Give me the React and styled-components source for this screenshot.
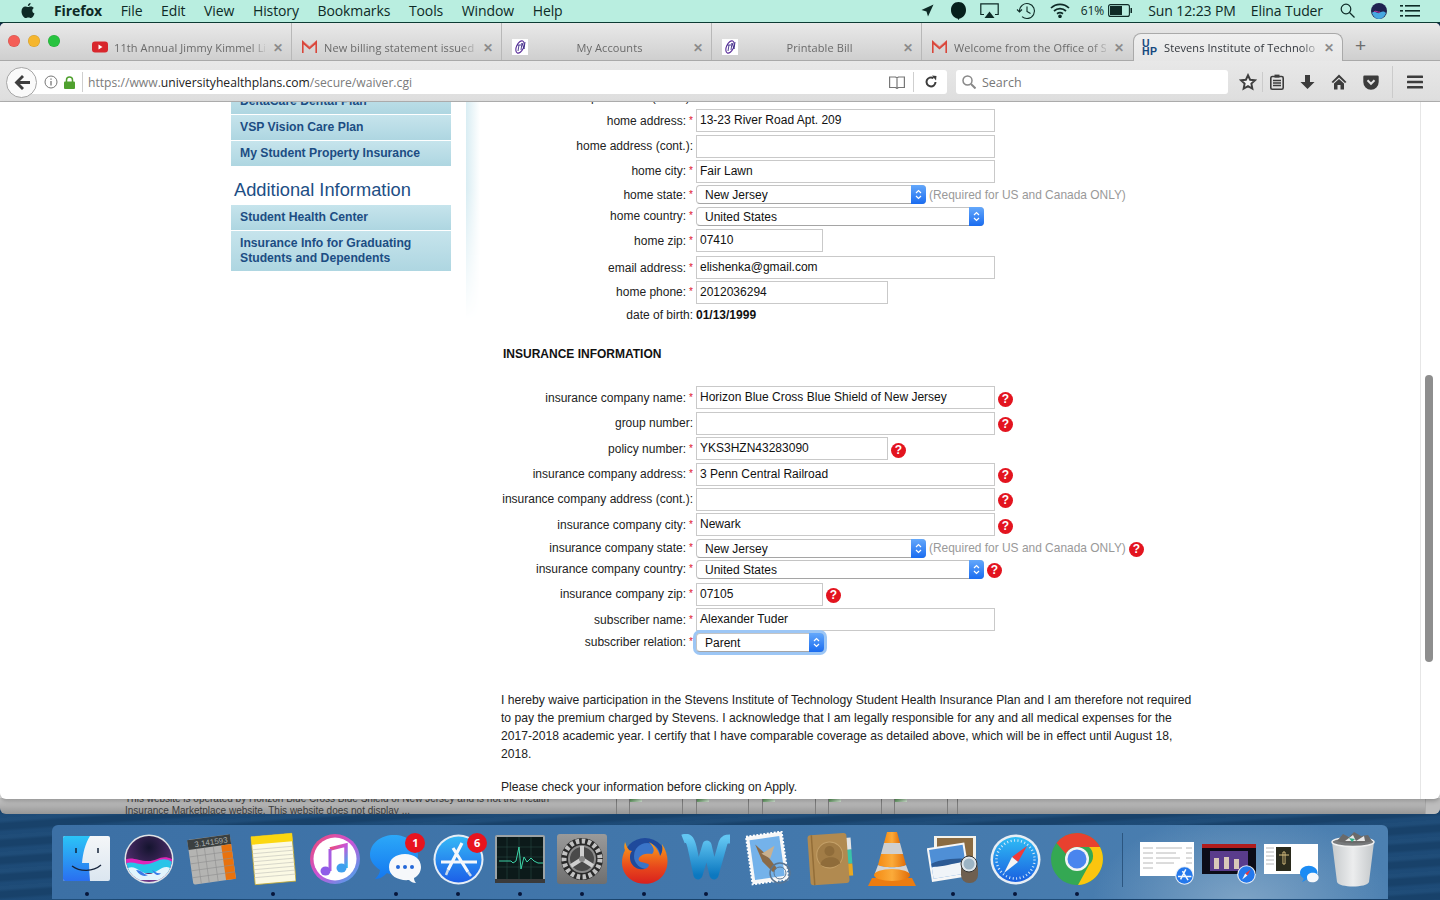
import React from "react";
import styled, { createGlobalStyle } from "styled-components";

const Global = createGlobalStyle`
  html, body { margin: 0; padding: 0; background: #10263f; overflow: hidden; }
  * { box-sizing: border-box; }
`;

const Screen = styled.div`
  width: 1440px; height: 900px; display: flex; flex-direction: column; overflow: hidden;
  font-family: "Liberation Sans", Arial, sans-serif; position: relative;
  background:
    repeating-linear-gradient(176deg, rgba(120,170,210,.06) 0 3px, rgba(0,0,0,.08) 6px 11px, rgba(110,160,210,.04) 14px 17px),
    linear-gradient(180deg, #0a1a2e 0, #0f2a49 18px, #1a4773 70px);
`;

/* ---------- menu bar ---------- */
const MenuBar = styled.div`
  height: 23px; flex: none; background: #b9eee0; border-bottom: 1px solid #0d3b34;
  display: flex; align-items: center; padding: 0 0 1px 21px;
  font-family: "Open Sans", sans-serif; font-size: 14px; color: #0e2a26;
`;
const AppleSlot = styled.span` width: 33px; display: flex; `;
const MenuItem = styled.span`
  margin-right: 18.6px; font-weight: ${p => (p.$bold ? 700 : 400)}; white-space: nowrap; letter-spacing: -.1px;
`;
const MenuRight = styled.div` margin-left: auto; display: flex; align-items: center; height: 22px; `;
const StatusIcon = styled.span` display: flex; margin-right: ${p => p.$mr ?? 14}px; `;
const StatusText = styled.span`
  font-size: ${p => p.$s ?? 14}px; margin-right: ${p => p.$mr ?? 13}px; white-space: nowrap; letter-spacing: -.1px;
`;

/* ---------- browser window ---------- */
const Window = styled.div`
  flex: none; height: 776px; display: flex; flex-direction: column;
  background: #e6e6e6; border-radius: 5px 5px 0 0;
`;
const TabStrip = styled.div`
  height: 38px; flex: none; display: flex; align-items: stretch; position: relative;
  background: linear-gradient(#e9e9e9, #cfcfcf); border-bottom: 1px solid #a9a9a9;
  border-radius: 5px 5px 0 0;
`;
const Lights = styled.div` width: 82px; flex: none; display: flex; gap: 8px; padding: 12px 0 0 8px; `;
const Light = styled.span`
  width: 12px; height: 12px; border-radius: 50%; background: ${p => p.$c}; box-shadow: inset 0 0 0 .5px rgba(0,0,0,.15);
`;
const Tab = styled.div`
  width: 210px; flex: none; display: flex; align-items: center; padding: 11px 0 0 10px; height: 37px;
  font-family: "Open Sans", sans-serif; font-size: 11px; color: #6a6a6a; position: relative;
  border-right: ${p => (p.$noline ? "none" : "1px solid #b8b8b8")};
`;
const ActiveTab = styled(Tab)`
  background: linear-gradient(#efefef, #e6e6e6); border: 1px solid #a9a9a9; border-bottom: none;
  border-radius: 8px 8px 0 0; margin: 10px 0 -1px 1px; height: 28px; padding: 0 0 1px 8px; color: #30343a;
`;
const TabIconBox = styled.span` width: 16px; height: 16px; flex: none; display: flex; margin-right: 6px; `;
const TabTitle = styled.span`
  flex: 1; white-space: nowrap; overflow: hidden; min-width: 0; text-align: ${p => (p.$center ? "center" : "left")};
  -webkit-mask-image: linear-gradient(90deg, #000 90%, rgba(0,0,0,.25));
  letter-spacing: .1px;
`;
const TabClose = styled.span`
  width: 26px; flex: none; padding-right: 1px; text-align: center; font-size: 12px; color: #8b8b8b; font-weight: 700;
`;
const UhpLogo = styled.span`
  width: 16px; flex: none; margin-right: 6px; display: flex; flex-direction: column; align-items: flex-start;
  font: 700 10.5px/8.500px "Liberation Sans", sans-serif; color: #17497f; letter-spacing: .3px;
`;
const NewTab = styled.span` margin: 11px 0 0 12px; font: 400 19px/24px "Liberation Sans", sans-serif; color: #6c6c6c; `;

const Toolbar = styled.div`
  height: 41px; flex: none; display: flex; align-items: center; padding: 2px 0 0 6px; position: relative;
  background: linear-gradient(#e8e8e8, #dedede); border-bottom: 1px solid #b1b1b1;
`;
const BackBtn = styled.span`
  width: 31px; height: 31px; border-radius: 50%; background: #fafafa; border: 1px solid #a6a6a6; flex: none;
  display: flex; align-items: center; justify-content: center; z-index: 1;
`;
const UrlBar = styled.div`
  width: 926px; height: 24px; margin-left: -16px; padding-left: 23px; flex: none; background: #fff; border-radius: 0 3px 3px 0;
  display: flex; align-items: center; font-family: "Open Sans", sans-serif; font-size: 12.15px; color: #7b7b7b;
`;
const UrlIcon = styled.span` display: flex; margin-right: ${p => p.$mr ?? 5}px; `;
const UrlDivider = styled.span` width: 1px; height: 20px; background: #cfcfcf; margin: 0 ${p => p.$r ?? 5}px 0 0; `;
const Host = styled.span` color: #222; `;
const UrlSpacer = styled.span` flex: 1; `;
const SearchBox = styled.div`
  width: 272px; height: 24px; margin-left: 9px; flex: none; background: #fff; border-radius: 3px; display: flex; align-items: center;
  padding-left: 6px; gap: 6px; font-family: "Open Sans", sans-serif; font-size: 12.5px; color: #777;
`;
const ToolIcons = styled.div` display: flex; align-items: center; margin-left: 11px; `;
const ToolIcon = styled.span` width: ${p => p.$w ?? 32}px; margin-left: ${p => p.$ml ?? 0}px; display: flex; justify-content: center; `;
const ToolDivider = styled.span`
  width: 1px; height: ${p => p.$h ?? 32}px; background: #cbcbcb; margin: 0 ${p => p.$mr ?? 0}px 0 ${p => p.$ml ?? 0}px;
`;

/* ---------- page ---------- */
const Viewport = styled.div`
  flex: none; height: 697px; background: #fff; display: flex; overflow: hidden; border-radius: 0 0 6px 6px;
  box-shadow: 0 2px 4px rgba(0,0,0,.25); position: relative; z-index: 1;
`;
const PageArea = styled.div` width: 1421px; flex: none; overflow: hidden; display: flex; border-right: 1px solid #e6e6e6; `;
const Rail = styled.div` flex: 1; padding: 273px 0 0 4px; `;
const Thumb = styled.div` width: 8px; height: 287px; border-radius: 4px; background: #8e8e8e; `;

const Sidebar = styled.aside`
  width: 220px; margin-left: 231px; flex: none; display: flex; flex-direction: column; gap: 1px; margin-top: -13px;
`;
const SideLink = styled.div`
  padding: 5px 9px; font-size: 12.2px; line-height: 15px; font-weight: 700; color: #1c4d83;
  background: linear-gradient(#c6e4ec, #aed6e1); min-height: 25px;
`;
const SideHeading = styled.h3`
  margin: 11px 0 2px 3px; font-size: 18.3px; line-height: 24px; font-weight: 400; color: #1d4e85;
`;
const Fade = styled.div`
  width: 14px; height: 218px; margin-left: 15px; flex: none;
  background: linear-gradient(90deg, #d9edf3, #fff);
  -webkit-mask-image: linear-gradient(#000 40%, transparent);
`;
const Main = styled.main`
  flex: none; width: 710px; margin: -16px 0 0 18px; font-size: 12px; color: #222;
`;
const Row = styled.div`
  display: flex; align-items: center; height: ${p => p.$h ?? (p.$select ? 21.8 : 25.4)}px;
`;
const Label = styled.label` width: 195px; flex: none; text-align: right; white-space: nowrap; `;
const Star = styled.span` color: #e0142c; margin-left: 3px; font-size: 10px; vertical-align: 1px; `;
const Field = styled.div`
  width: ${p => p.$w}px; height: 23px; margin-left: 3px; flex: none; border: 1px solid #c9c9c9; background: #fff;
  padding: 0 3px; line-height: 21px; color: #111; white-space: nowrap;
`;
const Select = styled.div`
  width: ${p => p.$w}px; height: 19px; margin-left: 3px; flex: none; display: flex; border-radius: 4px; background: #fff;
  border: 1px solid #c4c4c4; border-bottom-color: #a5a5a5; color: #111; line-height: 18px; padding-left: 8px; position: relative; overflow: visible;
  box-shadow: ${p => (p.$focus ? "0 0 0 3px #9cc6f5" : "none")};
`;
const SelectText = styled.span` flex: 1; `;
const Stepper = styled.span`
  width: 15px; margin: -1px -1px -1px 0; flex: none; border-radius: 0 4px 4px 0; background: linear-gradient(#64a8fb, #1a6cf0);
  display: flex; align-items: center; justify-content: center;
`;
const Hint = styled.span` color: #999; margin-left: 3px; white-space: nowrap; font-size: 11.95px; `;
const Help = styled.span`
  width: 15px; height: 15px; border-radius: 50%; background: #e3141f; color: #fff; flex: none;
  margin: 3px 0 0 3px; font: 700 12px/15px "Liberation Sans", sans-serif; text-align: center;
`;
const Bold = styled.b` margin-left: 3px; color: #111; `;
const SectionTitle = styled.h4`
  margin: 20px 0 23px 5px; font-size: 12px; line-height: 16px; font-weight: 700; color: #111;
`;
const Legal = styled.p`
  margin: ${p => p.$mt}px 0 0 3px; max-width: 695px; line-height: 18px; font-size: 12.15px; color: #222;
`;

/* ---------- window behind ---------- */
const BehindStrip = styled.div`
  height: 16px; flex: none; margin-top: -1px; display: flex; overflow: hidden; position: relative;
  background: linear-gradient(#c8c8c8, #979797); border-radius: 0 0 6px 6px; font-size: 10px; color: #3a3a3a;
`;
const BehindText = styled.div`
  width: 491px; margin-left: 125px; flex: none; line-height: 12px; margin-top: -5px; white-space: nowrap;
`;
const Cell = styled.div`
  width: ${p => p.$w ?? 66.2}px; flex: none; height: 16px; border-left: 1px solid #7d7d7d; padding-left: ${p => p.$in ?? 12.4}px; display: flex;
`;
const CellInner = styled.div` flex: 1; border-left: 1px solid #7d7d7d; `;
const Broken = styled.span`
  display: block; width: 12px; height: 4px; background: linear-gradient(135deg, #4f8f4f, #d8e8d8);
`;
const BehindRail = styled.div` margin-left: auto; width: 15px; border-left: 1px solid #aaa; background: #bdbdbd; `;

/* ---------- dock ---------- */
const Desktop = styled.div` flex: 1; padding: 11px 52px 0; display: flex; `;
const Dock = styled.div`
  width: 1336px; height: 74px; border-radius: 6px 6px 0 0; padding: 3px 0 0 4px; display: flex;
  background:
    radial-gradient(150px 90px at 1190px 105%, rgba(190,210,225,.45), transparent),
    linear-gradient(90deg, #3c70a5, #4378ac 55%, #4c80b1);
`;
const Slot = styled.div`
  width: ${p => p.$w ?? 61.9}px; flex: none; display: flex; flex-direction: column; align-items: center; position: relative;
`;
const IconBox = styled.div` height: 62px; display: flex; align-items: center; justify-content: center; `;
const Dot = styled.span`
  width: 4px; height: 4px; border-radius: 50%; background: #06163a; margin-top: 2px; visibility: ${p => (p.$on ? "visible" : "hidden")};
`;
const Badge = styled.span`
  position: absolute; top: 5px; right: 2px; width: 20px; height: 20px; border-radius: 50%; background: #e8141e; color: #fff;
  font: 700 11px/20px "Open Sans", sans-serif; text-align: center;
`;
const DockDivider = styled.span` width: 1px; height: 54px; margin: 5px 13px 0 14px; background: #2c5680; flex: none; `;

/* ---------- drawings ---------- */
const Apple = () => (
  <svg width="14" height="16" viewBox="0 0 14 16" fill="#0e2a26">
    <path d="M9.600 0c.1 1.200-.9 2.900-2.700 3 -.2-1.300 1-2.800 2.700-3zM7 4c.8 0 1.500-.6 2.900-.6 1.100 0 2.300.6 3 1.600-2.300 1.300-2 4.500.6 5.500-.6 1.700-2 4.500-3.500 4.500-1 0-1.300-.6-2.600-.6s-1.700.6-2.600.6C2.900 15 .5 11.500.5 8.400.5 5.300 2.500 3.600 4.400 3.600c1.100 0 1.900.4 2.600.4z" />
  </svg>
);
const Youtube = () => (
  <svg width="16" height="16" viewBox="0 0 16 16"><rect y="2.500" width="16" height="11" rx="3" fill="#d8262c" /><path d="M6.500 5.500v5l4-2.500z" fill="#fff" /></svg>
);
const GmailM = () => (
  <svg width="15" height="16" viewBox="0 0 15 16"><path d="M.5 14V3l7 6 7-6v11" fill="none" stroke="#d9463a" strokeWidth="2.200" /><path d="M2 3l5.500 5L13 3" fill="none" stroke="#e8847c" strokeWidth=".7" /></svg>
);
const TnLogo = () => (
  <svg width="16" height="16" viewBox="0 0 16 16"><rect width="16" height="16" fill="#fff" /><ellipse cx="8" cy="8" rx="3.500" ry="6.500" transform="rotate(25 8 8)" fill="none" stroke="#5a2d9a" strokeWidth="1.100" /><path d="M5 6h4M7 6l-1 6M9 11l1-7 2 6 1-7" stroke="#3c2a86" strokeWidth=".9" fill="none" /></svg>
);
const Tools = {
  star: <svg width="18" height="18" viewBox="0 0 24 24" fill="#f2f2f2" stroke="#3f3f3f" strokeWidth="2.600"><path d="M12 3l2.800 6 6.500.8-4.800 4.400 1.300 6.500L12 17.500 6.200 20.700l1.300-6.500-4.800-4.400L9.200 9z" /></svg>,
  clip: <svg width="14" height="16" viewBox="0 0 14 16"><rect x=".8" y="2.500" width="12.400" height="12.700" rx="1.500" fill="none" stroke="#3c3c3c" strokeWidth="1.600" /><rect x="4.500" y=".6" width="5" height="3" fill="#3c3c3c" /><path d="M3 6.500h8M3 9h8M3 11.500h8" stroke="#3c3c3c" strokeWidth="1.400" /></svg>,
  down: <svg width="15" height="16" viewBox="0 0 15 16" fill="#3c3c3c"><path d="M5 1h5v7h4.500l-7 7-7-7H5z" /></svg>,
  home: <svg width="16" height="16" viewBox="0 0 16 16" fill="#3c3c3c"><path d="M8 .5L.5 8l1.500 1L8 3.500 14 9l1.500-1z" /><path d="M3 9.500L8 5l5 4.500V15.500H9.500V11h-3v4.500H3z" /></svg>,
  pocket: <svg width="16" height="15" viewBox="0 0 16 15"><path d="M1.500 .5h13A1.200 1.200 0 0 1 15.700 1.700V7A7.700 7.700 0 0 1 .3 7V1.700A1.200 1.200 0 0 1 1.500 .5z" fill="#3c3c3c" /><path d="M4.500 5.300L8 8.800l3.500-3.500" fill="none" stroke="#e4e4e4" strokeWidth="2" /></svg>,
  menu: <svg width="16" height="14" viewBox="0 0 16 14" fill="#3c3c3c"><rect width="16" height="2.600" rx=".6" y=".4" /><rect width="16" height="2.600" rx=".6" y="5.700" /><rect width="16" height="2.600" rx=".6" y="11" /></svg>,
};
const StepArrows = () => (
  <svg width="7" height="11" viewBox="0 0 7 11" fill="none" stroke="#fff" strokeWidth="1.200"><path d="M1 4l2.500-2.500L6 4M1 7l2.500 2.500L6 7" /></svg>
);

/* dock icons */
const Finder = () => (
  <svg width="47" height="46" viewBox="0 0 47 46">
    <defs><linearGradient id="fa" x2="0" y2="1"><stop stopColor="#2bc4f7" /><stop offset="1" stopColor="#2a6ff0" /></linearGradient><linearGradient id="fb" x2="0" y2="1"><stop stopColor="#f4f6f8" /><stop offset="1" stopColor="#dbe6f0" /></linearGradient></defs>
    <rect width="47" height="45" rx="2" fill="url(#fb)" />
    <path d="M2 0h25c-5 8-7 17-8 27h7c0 6 .5 12 1 18H2a2 2 0 0 1-2-2V2a2 2 0 0 1 2-2z" fill="url(#fa)" />
    <path d="M13 12v5M35 12v5" stroke="#15233a" strokeWidth="1.500" />
    <path d="M9 30c8 6 21 6 29-1" fill="none" stroke="#15233a" strokeWidth="1.300" />
  </svg>
);
const Siri = () => (
  <svg width="50" height="50" viewBox="0 0 50 50">
    <defs><radialGradient id="sg" cy=".25" r=".8"><stop stopColor="#14142e" /><stop offset=".55" stopColor="#42285f" /><stop offset="1" stopColor="#7a3a90" /></radialGradient><clipPath id="sc"><circle cx="25" cy="25" r="23" /></clipPath></defs>
    <circle cx="25" cy="25" r="24.500" fill="#dfe3e6" /><circle cx="25" cy="25" r="23" fill="url(#sg)" />
    <g clipPath="url(#sc)">
      <path d="M0 26c8-4 14 1 24 1s14-8 26-1v8H0z" fill="#e024b8" />
      <path d="M0 30c10-4 14 2 24 0s14-9 26-1v10H0z" fill="#28c4e8" />
      <path d="M4 34c8-3 12 5 20 6s14-10 22-6l-4 12H8z" fill="#e2f4fc" />
      <path d="M12 36c6 0 8 5 12 5-4 2-8 1-12-5zM28 36c4 2 5 4 9 3-2 3-6 3-9-3z" fill="#3a7be8" />
    </g>
  </svg>
);
const Calc = () => (
  <svg width="50" height="54" viewBox="0 0 50 54">
    <g transform="rotate(-8 25 27)">
      <rect x="4" y="5" width="43" height="45" rx="2" fill="#b4b4b2" />
      <rect x="4" y="5" width="43" height="10" fill="#3b4040" />
      <text x="44" y="13" fontSize="8" fill="#a8adad" textAnchor="end" fontFamily="Liberation Sans">3.141593</text>
      <rect x="37" y="15" width="10" height="35" fill="#e8720e" />
      <path d="M4 22h43M4 29h43M4 36h43M4 43h43M12 15v35M20 15v35M29 15v35" stroke="#8f8f8f" strokeWidth=".6" />
    </g>
  </svg>
);
const Notes = () => (
  <svg width="46" height="56" viewBox="0 0 46 56">
    <g transform="rotate(-5 23 28)">
      <rect x="3" y="4" width="41" height="48" fill="#fbf9e4" stroke="#c2a82e" strokeWidth=".8" />
      <rect x="3" y="4" width="41" height="8" fill="#fbd710" />
      <path d="M3 17h41M3 21h41M3 25h41M3 29h41M3 33h41M3 37h41M3 41h41M3 45h41" stroke="#c9c9c0" strokeWidth=".7" />
    </g>
  </svg>
);
const Itunes = () => (
  <svg width="52" height="52" viewBox="0 0 52 52">
    <defs><linearGradient id="ig" x2="1" y2="1"><stop stopColor="#f04a6e" /><stop offset=".5" stopColor="#c854d8" /><stop offset="1" stopColor="#30b4f0" /></linearGradient></defs>
    <circle cx="26" cy="26" r="25" fill="url(#ig)" /><circle cx="26" cy="26" r="21.500" fill="#fff" />
    <path d="M21 16l16-4v23" fill="none" stroke="url(#ig)" strokeWidth="3.500" />
    <path d="M21 16v22" stroke="#a85ce0" strokeWidth="3" />
    <ellipse cx="16.500" cy="38" rx="5" ry="4.500" fill="#8f5ce8" /><ellipse cx="32.500" cy="35" rx="5" ry="4.500" fill="#3ea0ee" />
  </svg>
);
const Messages = () => (
  <svg width="52" height="50" viewBox="0 0 52 50">
    <defs><linearGradient id="mg" x2="0" y2="1"><stop stopColor="#2ca8f8" /><stop offset="1" stopColor="#1478f0" /></linearGradient></defs>
    <path d="M24 1c13 0 24 8 24 20 0 8-6 15-14 18-6 2-13 2-17 0-3 3-7 6-12 6 3-3 5-6 5-9C4 32 0 27 0 21 0 9 11 1 24 1z" fill="url(#mg)" />
    <path d="M35 20c9 0 16 5 16 13 0 5-3 9-7 11 0 2 1 4 2 5-3 0-5-1-7-3-9 1-20-3-20-13 0-8 7-13 16-13z" fill="#f6f8fb" />
    <circle cx="28" cy="33" r="2" fill="#2468d8" /><circle cx="35" cy="33" r="2" fill="#2468d8" /><circle cx="42" cy="33" r="2" fill="#2468d8" />
  </svg>
);
const AppStore = () => (
  <svg width="51" height="51" viewBox="0 0 51 51">
    <defs><linearGradient id="ag" x2="0" y2="1"><stop stopColor="#35b8f6" /><stop offset="1" stopColor="#1c5fe8" /></linearGradient></defs>
    <circle cx="25.500" cy="25.500" r="25" fill="#e6eef6" /><circle cx="25.500" cy="25.500" r="23" fill="url(#ag)" />
    <path d="M29 9L15 36M20 14l15 24M8 28h36" stroke="#f4f8fc" strokeWidth="3.200" fill="none" />
    <path d="M15 36l-2 5M35 38l3 4" stroke="#c8d8ea" strokeWidth="2.500" />
  </svg>
);
const Activity = () => (
  <svg width="50" height="48" viewBox="0 0 50 48">
    <rect width="50" height="48" rx="2" fill="#9ca3a6" /><rect x="2" y="2" width="46" height="42" fill="#0c1a1a" />
    <path d="M2 12h46M2 22h46M2 32h46M12 2v42M24 2v42M36 2v42" stroke="#24443e" strokeWidth=".7" />
    <path d="M4 26h12l2 2 3-2 3-14 2 22 3-12 3 5 4-4 3 3 4 2h5" fill="none" stroke="#3dd2a6" strokeWidth="1" />
    <rect y="44" width="50" height="4" fill="#3a3a3a" />
  </svg>
);
const SysPrefs = () => (
  <svg width="50" height="50" viewBox="0 0 50 50">
    <defs><linearGradient id="spg" x2="0" y2="1"><stop stopColor="#9a9a9a" /><stop offset="1" stopColor="#6f6f6f" /></linearGradient></defs>
    <rect width="50" height="50" rx="3" fill="url(#spg)" />
    <circle cx="25" cy="25" r="21" fill="#2a2a2a" />
    <circle cx="25" cy="25" r="18" fill="none" stroke="#c2c2c2" strokeWidth="5" strokeDasharray="3.500 2.500" />
    <circle cx="25" cy="25" r="13" fill="#4a4a4a" stroke="#8a8a8a" strokeWidth="2" />
    <path d="M25 25V12M25 25L14 32M25 25l11 7" stroke="#cfcfcf" strokeWidth="4" />
    <circle cx="25" cy="25" r="3" fill="#888" />
  </svg>
);
const Firefox = () => (
  <svg width="54" height="54" viewBox="0 0 54 54">
    <defs><linearGradient id="ff" x2="0" y2="1"><stop stopColor="#f9a21a" /><stop offset=".6" stopColor="#e8481c" /><stop offset="1" stopColor="#d8201e" /></linearGradient></defs>
    <circle cx="28" cy="28" r="22" fill="#1f4a9c" />
    <circle cx="30" cy="24" r="13" fill="#3a74c8" />
    <path d="M8 10c-1 4-1 6 0 8 -5 10-4 22 5 29 11 8 27 6 34-5 5-8 5-20-2-30 1 6 0 9-2 12-1-5-5-11-11-14 5 5 6 9 3 12-5-1-11 0-13 4-1 2 0 3 2 4 3 1 7 1 8 3-1 4-6 5-10 4-5-1-9-6-9-11 0-3 0-5 2-7-3 0-5-3-7-9z" fill="url(#ff)" />
  </svg>
);
const WordW = () => (
  <svg width="54" height="50" viewBox="0 0 54 50">
    <defs><linearGradient id="wg" x2="0" y2="1"><stop stopColor="#62c6f2" /><stop offset="1" stopColor="#0c78c0" /></linearGradient></defs>
    <path d="M4 5c5-2 7 0 9 8l6 28 9-30 7 30L44 9c2-4 3-4 7-4" fill="none" stroke="url(#wg)" strokeWidth="9" strokeLinejoin="round" />
  </svg>
);
const Mail = () => (
  <svg width="50" height="56" viewBox="0 0 50 56">
    <g transform="rotate(-8 24 26)">
      <rect x="6" y="3" width="36" height="48" fill="#f7f7f7" stroke="#fff" strokeWidth="2" strokeDasharray="2 1.500" />
      <rect x="9" y="7" width="30" height="40" fill="#74b2ea" />
      <path d="M14 12l10 12 8 14-4 4-9-12z" fill="#8a6a48" /><path d="M19 22l14-6-6 12z" fill="#c8b090" />
    </g>
    <circle cx="37" cy="42" r="10" fill="none" stroke="#5b7590" strokeWidth="1.500" />
    <circle cx="37" cy="42" r="6" fill="none" stroke="#5b7590" strokeWidth="1" />
  </svg>
);
const Contacts = () => (
  <svg width="50" height="56" viewBox="0 0 50 56">
    <g transform="rotate(-4 25 28)">
      <rect x="41" y="8" width="6" height="12" fill="#e3e3e3" /><rect x="41" y="20" width="6" height="14" fill="#3ac4a8" /><rect x="41" y="34" width="6" height="12" fill="#e8a822" />
      <rect x="4" y="3" width="39" height="50" rx="3" fill="#b18a50" />
      <path d="M8 3v50" stroke="#946e38" strokeWidth="1.500" />
      <circle cx="25" cy="24" r="13" fill="#a17c46" stroke="#c4a068" />
      <circle cx="25" cy="20" r="5" fill="#8f6c3a" /><path d="M15 33c2-9 18-9 20 0-5 4-15 4-20 0z" fill="#8f6c3a" />
    </g>
  </svg>
);
const Vlc = () => (
  <svg width="50" height="56" viewBox="0 0 50 56">
    <defs><linearGradient id="vg" x2="1"><stop stopColor="#f58a12" /><stop offset=".5" stopColor="#fbab3a" /><stop offset="1" stopColor="#e26e08" /></linearGradient></defs>
    <path d="M1 55l4-8h40l4 8z" fill="#ec7c10" />
    <path d="M20 1h10l3 11H17z" fill="url(#vg)" /><path d="M17 12h16l3 11H14z" fill="#cfcfcf" />
    <path d="M14 23h22l3 11c-4 3-24 3-28 0z" fill="url(#vg)" />
    <path d="M11 34c4 3 24 3 28 0l3 8c-3 7-31 7-34 0z" fill="#d4d4d4" />
    <ellipse cx="25" cy="44" rx="18" ry="6" fill="url(#vg)" />
  </svg>
);
const Preview = () => (
  <svg width="52" height="52" viewBox="0 0 52 52">
    <rect x="7" y="3" width="42" height="34" fill="#f4f2ea" /><rect x="10" y="5" width="36" height="29" fill="#8a6b42" />
    <g transform="rotate(-9 22 28)"><rect x="2" y="12" width="38" height="34" fill="#f6f6f6" /><rect x="4" y="14" width="34" height="29" fill="#4f8fd6" /><path d="M4 32c10-4 20 1 34-2v13H4z" fill="#f0f4f8" /><path d="M4 28c10-3 20-2 34 0v3c-14 0-24 2-34 0z" fill="#2c5a94" /></g>
    <rect x="34" y="28" width="17" height="22" rx="8" fill="#6e5f50" /><circle cx="42" cy="31" r="8" fill="#dfe6ea" stroke="#333" /><circle cx="42" cy="31" r="5.500" fill="#9cb4c4" />
  </svg>
);
const Safari = () => (
  <svg width="51" height="51" viewBox="0 0 51 51">
    <defs><linearGradient id="sf" x2="0" y2="1"><stop stopColor="#2fbdf5" /><stop offset="1" stopColor="#1a5fe0" /></linearGradient></defs>
    <circle cx="25.500" cy="25.500" r="25" fill="#e8eef4" /><circle cx="25.500" cy="25.500" r="22.500" fill="url(#sf)" />
    <circle cx="25.500" cy="25.500" r="19" fill="none" stroke="#d6e8f8" strokeWidth="2.500" strokeDasharray="1 2.500" />
    <path d="M37 12L22 23l6 5z" fill="#f03a3a" /><path d="M14 39l8-16 6 5z" fill="#f4f4f4" />
  </svg>
);
const Chrome = () => (
  <svg width="52" height="52" viewBox="0 0 52 52">
    <circle cx="26" cy="26" r="26" fill="#34a853" />
    <path d="M26 0a26 26 0 0 1 23 14H26a12 12 0 0 0-11 7L5.500 10A26 26 0 0 1 26 0z" fill="#e8412f" />
    <path d="M49 14a26 26 0 0 1-22 38l11-20a12 12 0 0 0 0-18z" fill="#fbc50f" />
    <circle cx="26" cy="26" r="12" fill="#f4f4f4" /><circle cx="26" cy="26" r="9.500" fill="#4a85ee" />
  </svg>
);
const Trash = () => (
  <svg width="44" height="56" viewBox="0 0 44 56">
    <defs><linearGradient id="tg" x2="1"><stop stopColor="#c6cacc" /><stop offset=".5" stopColor="#ecedee" /><stop offset="1" stopColor="#c4c8ca" /></linearGradient></defs>
    <path d="M1 11c6 5 36 5 42 0l-5 40c-2 6-30 6-32 0z" fill="url(#tg)" />
    <ellipse cx="22" cy="11" rx="21" ry="4.500" fill="#77797b" stroke="#f0f0f0" strokeWidth="1.500" />
    <path d="M6 10l6-7 6 3 5-5 7 4 7-1 4 6c-8 3-27 3-35 0z" fill="#6a6a6a" /><path d="M14 10l8-6 3 6zM25 10l8-5 1 5z" fill="#e8e8e8" /><path d="M18 7l6 1-3 3z" fill="#33b08a" />
  </svg>
);
const Win = ({ w = 54, h = 34, children }) => (
  <svg width={w} height={h} viewBox={`0 0 ${w} ${h}`}><rect width={w} height={h} fill="#fff" />{children}</svg>
);
const MiniBadge = styled.span`
  position: absolute; left: ${p => p.$l}px; top: ${p => p.$t}px; display: flex;
`;
const ThumbWrap = styled.div` position: relative; height: 62px; display: flex; align-items: center; `;
const MiniApp = () => <svg width="19" height="19" viewBox="0 0 51 51"><circle cx="25.500" cy="25.500" r="25" fill="#e6eef6" /><circle cx="25.500" cy="25.500" r="22" fill="#2478ec" /><path d="M29 9L15 36M20 14l15 24M8 28h36" stroke="#f4f8fc" strokeWidth="4" fill="none" /></svg>;
const MiniSafari = () => <svg width="19" height="19" viewBox="0 0 51 51"><circle cx="25.500" cy="25.500" r="25" fill="#e8eef4" /><circle cx="25.500" cy="25.500" r="22" fill="#2478ec" /><path d="M37 12L22 23l6 5z" fill="#f03a3a" /><path d="M14 39l8-16 6 5z" fill="#f4f4f4" /></svg>;
const MiniMsg = () => <svg width="19" height="19" viewBox="0 0 52 50"><path d="M24 1c13 0 24 8 24 20 0 8-6 15-14 18-6 2-13 2-17 0-3 3-7 6-12 6 3-3 5-6 5-9C4 32 0 27 0 21 0 9 11 1 24 1z" fill="#1c8cf4" /><path d="M35 20c9 0 16 5 16 13s-9 14-18 13c-9 0-14-5-14-13 0-8 7-13 16-13z" fill="#f6f8fb" /></svg>;

const dockApps = [
  [Finder, 1], [Siri, 0], [Calc, 0], [Notes, 1], [Itunes, 0], [Messages, 1, "1"], [AppStore, 1, "6"], [Activity, 1],
  [SysPrefs, 1], [Firefox, 1], [WordW, 1], [Mail, 0], [Contacts, 0], [Vlc, 0], [Preview, 1], [Safari, 1], [Chrome, 1],
];

const menus = ["File", "Edit", "View", "History", "Bookmarks", "Tools", "Window", "Help"];

const Rows = ({ rows }) =>
  rows.map((r, i) => (
    <Row key={i} $select={r.sel} $h={r.h}>
      <Label>{r.l}{r.req && <Star>*</Star>}</Label>
      {r.sel ? (
        <Select $w={r.w} $focus={r.focus}><SelectText>{r.v}</SelectText><Stepper><StepArrows /></Stepper></Select>
      ) : (
        <Field $w={r.w}>{r.v}</Field>
      )}
      {r.hint && <Hint>(Required for US and Canada ONLY)</Hint>}
      {r.help && <Help>?</Help>}
    </Row>
  ));

const homeRows = [
  { l: "home address:", req: 1, v: "13-23 River Road Apt. 209", w: 299 },
  { l: "home address (cont.):", v: "", w: 299 },
  { l: "home city:", req: 1, v: "Fair Lawn", w: 299 },
  { l: "home state:", req: 1, v: "New Jersey", w: 230, sel: 1, hint: 1, h: 21 },
  { l: "home country:", req: 1, v: "United States", w: 288, sel: 1 },
  { l: "home zip:", req: 1, v: "07410", w: 127, h: 28 },
  { l: "email address:", req: 1, v: "elishenka@gmail.com", w: 299 },
  { l: "home phone:", req: 1, v: "2012036294", w: 192, h: 24 },
];
const insRows = [
  { l: "insurance company name:", req: 1, v: "Horizon Blue Cross Blue Shield of New Jersey", w: 299, help: 1 },
  { l: "group number:", v: "", w: 299, help: 1 },
  { l: "policy number:", req: 1, v: "YKS3HZN43283090", w: 192, help: 1 },
  { l: "insurance company address:", req: 1, v: "3 Penn Central Railroad", w: 299, help: 1 },
  { l: "insurance company address (cont.):", v: "", w: 299, help: 1 },
  { l: "insurance company city:", req: 1, v: "Newark", w: 299, help: 1 },
  { l: "insurance company state:", req: 1, v: "New Jersey", w: 230, sel: 1, hint: 1, help: 1, h: 21 },
  { l: "insurance company country:", req: 1, v: "United States", w: 288, sel: 1, help: 1 },
  { l: "insurance company zip:", req: 1, v: "07105", w: 127, help: 1, h: 28 },
  { l: "subscriber name:", req: 1, v: "Alexander Tuder", w: 299, h: 23 },
  { l: "subscriber relation:", req: 1, v: "Parent", w: 128, sel: 1, focus: 1 },
];

export default function App() {
  return (
    <Screen>
      <Global />
      <MenuBar>
        <AppleSlot><Apple /></AppleSlot>
        <MenuItem $bold>Firefox</MenuItem>
        {menus.map(m => <MenuItem key={m}>{m}</MenuItem>)}
        <MenuRight>
          <StatusIcon $mr={17}><svg width="13" height="13" viewBox="0 0 13 13" fill="#0e2a26"><path d="M12.500.5L.5 6l5 1.500L7 12.500z" /></svg></StatusIcon>
          <StatusIcon $mr={14}><svg width="15" height="18" viewBox="0 0 15 18" fill="#06201c"><path d="M7.500 0C12 0 15 3.500 15 8s-3 8-6.500 8.500L7.500 18l-1-1.500C3 16 0 12.500 0 8s3-8 7.500-8z" /></svg></StatusIcon>
          <StatusIcon $mr={17}><svg width="19" height="16" viewBox="0 0 19 16" fill="none" stroke="#0e2a26" strokeWidth="1.200"><path d="M4 11.500H.8V.8h17.400v10.700H15" /><path d="M9.500 8.500l5 6.500h-10z" fill="#0e2a26" stroke="none" /></svg></StatusIcon>
          <StatusIcon $mr={14}><svg width="20" height="18" viewBox="0 0 20 18" fill="none" stroke="#0e2a26" strokeWidth="1.100"><path d="M3.500 9a7.500 7.500 0 1 1 2.500 5.600" /><path d="M1 7.500l2.500 2.500 2.500-2.500" /><path d="M11 4.500V9.500l3.500 2" /></svg></StatusIcon>
          <StatusIcon $mr={11}><svg width="20" height="15" viewBox="0 0 20 15" fill="none" stroke="#0e2a26" strokeWidth="1.700"><path d="M1 5a13 13 0 0 1 18 0M4 8a9 9 0 0 1 12 0M7 10.800a5 5 0 0 1 6 0" /><circle cx="10" cy="13.300" r="1" fill="#0e2a26" /></svg></StatusIcon>
          <StatusText $s={12} $mr={4}>61%</StatusText>
          <StatusIcon $mr={16}><svg width="24" height="13" viewBox="0 0 24 13"><rect x=".6" y=".6" width="20.800" height="11.800" rx="2" fill="none" stroke="#0e2a26" strokeWidth="1.100" /><rect x="2" y="2" width="12" height="9" fill="#0e2a26" /><rect x="22.500" y="4" width="1.500" height="5" fill="#0e2a26" /></svg></StatusIcon>
          <StatusText $mr={15}>Sun 12:23 PM</StatusText>
          <StatusText $mr={17}>Elina Tuder</StatusText>
          <StatusIcon $mr={16}><svg width="15" height="15" viewBox="0 0 15 15" fill="none" stroke="#0e2a26" strokeWidth="1.200"><circle cx="6" cy="6" r="4.800" /><path d="M9.500 9.500l5 5" /></svg></StatusIcon>
          <StatusIcon $mr={13}><svg width="16" height="16" viewBox="0 0 16 16"><circle cx="8" cy="8" r="8" fill="#1f2250" /><path d="M1 10c3-3 5 1 7 0s4-3 7 0c-1 3-4 6-7 6s-6-3-7-6z" fill="#46a8e0" /><path d="M3 9c2-2 4 1 6 0" stroke="#d83ab0" fill="none" /></svg></StatusIcon>
          <StatusIcon $mr={20}><svg width="20" height="14" viewBox="0 0 20 14" fill="#0e2a26"><rect y="1" width="3" height="1.600" /><rect x="5" y="1" width="15" height="1.600" /><rect y="6" width="3" height="1.600" /><rect x="5" y="6" width="15" height="1.600" /><rect y="11" width="3" height="1.600" /><rect x="5" y="11" width="15" height="1.600" /></svg></StatusIcon>
        </MenuRight>
      </MenuBar>

      <Window>
        <TabStrip>
          <Lights><Light $c="#f45e57" /><Light $c="#f5b62e" /><Light $c="#27c33f" /></Lights>
          <Tab><TabIconBox><Youtube /></TabIconBox><TabTitle>11th Annual Jimmy Kimmel Liv</TabTitle><TabClose>✕</TabClose></Tab>
          <Tab><TabIconBox><GmailM /></TabIconBox><TabTitle>New billing statement issued</TabTitle><TabClose>✕</TabClose></Tab>
          <Tab><TabIconBox><TnLogo /></TabIconBox><TabTitle $center>My Accounts</TabTitle><TabClose>✕</TabClose></Tab>
          <Tab><TabIconBox><TnLogo /></TabIconBox><TabTitle $center>Printable Bill</TabTitle><TabClose>✕</TabClose></Tab>
          <Tab $noline><TabIconBox><GmailM /></TabIconBox><TabTitle>Welcome from the Office of S</TabTitle><TabClose>✕</TabClose></Tab>
          <ActiveTab $noline><UhpLogo><span>U</span><span>HP</span></UhpLogo><TabTitle>Stevens Institute of Technolo</TabTitle><TabClose>✕</TabClose></ActiveTab>
          <NewTab>+</NewTab>
        </TabStrip>
        <Toolbar>
          <BackBtn><svg width="16" height="15" viewBox="0 0 16 15" fill="#3d3d3d"><path d="M8 0l2 2-4 4h10v3H6l4 4-2 2-7.500-7.500z" /></svg></BackBtn>
          <UrlBar>
            <UrlIcon $mr={6}><svg width="14" height="14" viewBox="0 0 14 14" fill="none" stroke="#777"><circle cx="7" cy="7" r="6" /><path d="M7 6v4.500M7 3.500v1.300" strokeWidth="1.300" /></svg></UrlIcon>
            <UrlIcon $mr={7}><svg width="11" height="13" viewBox="0 0 11 13"><path d="M2.500 6V4a3 3 0 0 1 6 0v2" fill="none" stroke="#4fa02e" strokeWidth="1.500" /><rect y="5.500" width="11" height="7.500" rx="1" fill="#4fa02e" /></svg></UrlIcon>
            <UrlDivider $r={5} />
            <span>https://www.<Host>universityhealthplans.com</Host>/secure/waiver.cgi</span>
            <UrlSpacer />
            <UrlIcon $mr={8}><svg width="16" height="13" viewBox="0 0 16 13" fill="none" stroke="#777" strokeWidth="1.200"><path d="M.6 1h6l1.400 1 1.400-1h6v10.500h-6L8 12.500l-1.400-1h-6zM8 2v10" /></svg></UrlIcon>
            <UrlDivider $r={10} />
            <UrlIcon $mr={9}><svg width="14" height="14" viewBox="0 0 14 14" fill="none" stroke="#3c3c3c" strokeWidth="2"><path d="M11.500 7A4.500 4.500 0 1 1 9.500 3.200" /><path d="M8 .5l4.500.5-.5 4.500z" fill="#3c3c3c" stroke="none" /></svg></UrlIcon>
          </UrlBar>
          <SearchBox>
            <svg width="14" height="14" viewBox="0 0 14 14" fill="none" stroke="#888" strokeWidth="1.500"><circle cx="5.500" cy="5.500" r="4.500" /><path d="M9 9l4.500 4.500" strokeWidth="2" /></svg>
            Search
          </SearchBox>
          <ToolIcons>
            <ToolIcon $w={18}>{Tools.star}</ToolIcon>
            <ToolDivider $h={20} $ml={5} $mr={6} />
            <ToolIcon $w={16}>{Tools.clip}</ToolIcon>
            <ToolIcon $ml={6}>{Tools.down}</ToolIcon>
            <ToolIcon>{Tools.home}</ToolIcon>
            <ToolIcon>{Tools.pocket}</ToolIcon>
            <ToolIcon $w={5} />
            <ToolDivider />
            <ToolIcon $w={43}>{Tools.menu}</ToolIcon>
          </ToolIcons>
        </Toolbar>
        <Viewport>
          <PageArea>
            <Sidebar>
              <SideLink>DeltaCare Dental Plan</SideLink>
              <SideLink>VSP Vision Care Plan</SideLink>
              <SideLink>My Student Property Insurance</SideLink>
              <SideHeading>Additional Information</SideHeading>
              <SideLink>Student Health Center</SideLink>
              <SideLink>Insurance Info for Graduating<br />Students and Dependents</SideLink>
            </Sidebar>
            <Fade />
            <Main>
              <Row $h={22}><Label>permanent (home):</Label></Row>
              <Rows rows={homeRows} />
              <Row $select><Label>date of birth:</Label><Bold>01/13/1999</Bold></Row>
              <SectionTitle>INSURANCE INFORMATION</SectionTitle>
              <Rows rows={insRows} />
              <Legal $mt={37.5}>
                I hereby waive participation in the Stevens Institute of Technology Student Health Insurance Plan and I am therefore not required
                to pay the premium charged by Stevens. I acknowledge that I am legally responsible for any and all medical expenses for the
                2017-2018 academic year. I certify that I have comparable coverage as detailed above, which will be in effect until August 18,
                2018.
              </Legal>
              <Legal $mt={15}>Please check your information before clicking on Apply.</Legal>
            </Main>
          </PageArea>
          <Rail><Thumb /></Rail>
        </Viewport>
      </Window>

      <BehindStrip>
        <BehindText>
          This website is operated by Horizon Blue Cross Blue Shield of New Jersey and is not the Health<br />
          Insurance Marketplace website. This website does not display ...
        </BehindText>
        {[0, 1, 2, 3, 4].map(i => <Cell key={i}><CellInner><Broken /></CellInner></Cell>)}
        <Cell $w={11} $in={9}><CellInner /></Cell>
        <BehindRail />
      </BehindStrip>

      <Desktop>
        <Dock>
          {dockApps.map(([Icon, on, badge], i) => (
            <Slot key={i}>
              <IconBox><Icon /></IconBox>
              <Dot $on={on} />
              {badge && <Badge>{badge}</Badge>}
            </Slot>
          ))}
          <DockDivider />
          <Slot $w={62}>
            <ThumbWrap>
              <Win><path d="M3 6h10M3 11h10M3 16h10M3 21h10M3 26h10M16 6h26M16 11h20M16 16h24M16 21h18M46 6h6M46 11h6M46 16h6M46 21h6" stroke="#b8b8b8" strokeWidth="1" /></Win>
              <MiniBadge $l={35} $t={38}><MiniApp /></MiniBadge>
            </ThumbWrap>
          </Slot>
          <Slot $w={62}>
            <ThumbWrap>
              <Win h={30}><rect width="54" height="30" fill="#0c0c18" /><rect width="54" height="4" fill="#b01c1c" /><rect x="8" y="7" width="38" height="20" fill="#5a3c8c" /><path d="M12 14h5v11h-5zM22 13h5v12h-5zM32 15h5v10h-5z" fill="#d8c8b8" /></Win>
              <MiniBadge $l={35} $t={37}><MiniSafari /></MiniBadge>
            </ThumbWrap>
          </Slot>
          <Slot $w={62}>
            <ThumbWrap>
              <Win h={30}><rect x="12" y="3" width="15" height="24" fill="#2a2a1c" /><path d="M19 8h2v12h-2zM15 11h10" stroke="#d8c080" /><path d="M2 4h8M2 8h8M2 12h8M2 16h8M2 20h8" stroke="#b8b8b8" /></Win>
              <MiniBadge $l={36} $t={37}><MiniMsg /></MiniBadge>
            </ThumbWrap>
          </Slot>
          <Slot $w={62}><IconBox><Trash /></IconBox></Slot>
        </Dock>
      </Desktop>
    </Screen>
  );
}
